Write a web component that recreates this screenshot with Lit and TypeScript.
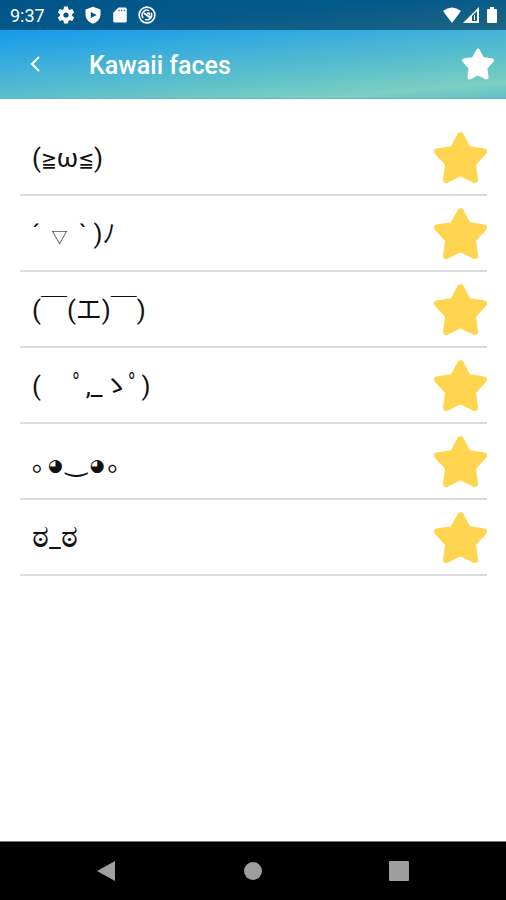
import { LitElement, html, css, svg } from "lit";
import { customElement, property, state } from "lit/decorators.js";

const starShape = svg`<path d="M50 8 L64 34 L94 39 L73 62 L77 92 L50 79 L23 92 L27 62 L6 39 L36 34 Z"
  fill="currentColor" stroke="currentColor" stroke-width="12" stroke-linejoin="round"/>`;

@customElement("status-bar")
class StatusBar extends LitElement {
  static styles = css`
    :host {
      display: flex;
      align-items: center;
      height: 30px;
      padding: 0 8px 0 10px;
      color: #fff;
      background: linear-gradient(175deg, #005488 0%, #04598b 45%, #1d6583 100%);
    }
    .time { font-size: 18px; line-height: 30px; padding-top: 2px; margin-right: 12px; }
    .group { display: flex; align-items: center; gap: 9px; }
    .right { margin-left: auto; gap: 1px; }
    svg { display: block; width: 18px; height: 18px; }
    .wide { width: 20px; }
    .signal { width: 17px; }
    .slim { width: 12px; margin-left: 5px; }
  `;
  render() {
    return html`
      <span class="time">9:37</span>
      <div class="group">
        <svg viewBox="1 1 22 22"><path fill="#fff" fill-rule="evenodd" d="M19.4 13c0-.3.1-.6.1-1s0-.7-.1-1l2.300-1.700c.2-.2.3-.4.1-.7l-2-3.600c-.1-.2-.4-.3-.6-.2l-2.600 1c-.5-.4-1.100-.7-1.700-1l-.4-2.700c0-.3-.2-.5-.5-.5h-4c-.3 0-.5.2-.5.5l-.4 2.700c-.6.3-1.200.6-1.700 1l-2.600-1c-.2-.1-.5 0-.6.2l-2 3.600c-.1.2-.1.5.1.7L4.600 11c0 .3-.1.6-.1 1s0 .7.1 1l-2.300 1.700c-.2.2-.3.4-.1.7l2 3.600c.1.2.4.3.6.2l2.600-1c.5.4 1.100.7 1.700 1l.4 2.700c0 .3.2.5.5.5h4c.3 0 .5-.2.5-.5l.4-2.700c.6-.3 1.200-.6 1.700-1l2.600 1c.2.1.5 0 .6-.2l2-3.600c.1-.2.1-.5-.1-.7zM12 15.200a3.200 3.200 0 1 1 0-6.400 3.200 3.200 0 0 1 0 6.400z"/></svg>
        <svg viewBox="0 0 24 24"><path fill="#fff" fill-rule="evenodd" d="M12 1 2 4.500V11c0 6 4 10.500 10 12.500 6-2 10-6.500 10-12.500V4.500zM9 8l8 4-8 4z"/></svg>
        <svg viewBox="0 0 24 24"><path fill="#fff" fill-rule="evenodd" d="M10 2h9a2 2 0 0 1 2 2v16a2 2 0 0 1-2 2H5a2 2 0 0 1-2-2V9zM10 5v2h1.500V5zM13.500 5v2H15V5zM17 5v2h1.500V5z"/></svg>
        <svg viewBox="0 0 24 24"><g fill="none" stroke="#fff"><circle cx="12" cy="12" r="10.500" stroke-width="2.200"/><path d="M7 16A6.300 6.300 0 0 1 15 6.500M17.500 9A6.300 6.300 0 0 1 9.500 17.800" stroke-width="2"/><path d="M8 9.500 17 16" stroke-width="2.600"/><path d="M12 9.500h3v3" stroke-width="2"/></g></svg>
      </div>
      <div class="group right">
        <svg class="wide" viewBox="0 0 20 18"><path fill="#fff" d="M10 17 1 5Q10-2 19 5z"/></svg>
        <svg class="signal" viewBox="1 0 17 18"><path fill="#fff" fill-rule="evenodd" d="M1 17 17 1v16zM10 10v5h5V5z"/><path d="M12.500 9v5" stroke="#fff" stroke-width="1"/></svg>
        <svg class="slim" viewBox="0 0 12 18"><path fill="#fff" d="M4 1h4v2h2q1 0 1 1v12q0 1-1 1H2q-1 0-1-1V4q0-1 1-1h2z"/></svg>
      </div>`;
  }
}

@customElement("app-header")
class AppHeader extends LitElement {
  static styles = css`
    :host {
      display: flex;
      align-items: center;
      height: 69px;
      box-sizing: border-box;
      padding: 0 12px 0 20px;
      color: #fff;
      border-bottom: 1px solid #5cb8bd;
      background: linear-gradient(175deg, #149ae9 0%, #22a1e5 12%, #45b3d8 40%, #5cc0cb 62%, #7ccfc3 86%, #60c0c6 100%);
    }
    button { display: grid; place-items: center; padding: 0; border: 0; background: none; color: inherit; cursor: pointer; }
    .back { width: 30px; height: 40px; }
    .back svg { width: 12px; height: 16px; }
    h1 { margin: 0 0 0 39px; font-size: 25px; line-height: 32px; font-weight: 500; padding-top: 4px; }
    .fav { margin-left: auto; }
    .fav svg { width: 32px; height: 32px; }
  `;
  render() {
    return html`
      <button class="back" aria-label="Back">
        <svg viewBox="0 0 12 16"><path d="M10 1 3 8l7 7" fill="none" stroke="#fff" stroke-width="2"/></svg>
      </button>
      <h1>Kawaii faces</h1>
      <button class="fav" aria-label="Favorites"><svg viewBox="0 0 100 100">${starShape}</svg></button>`;
  }
}

interface Part {
  text: string;
  kind?: "math" | "shape" | "eye" | "indic";
}

@customElement("face-row")
class FaceRow extends LitElement {
  @property({ attribute: false }) parts: Part[] = [];
  @state() starred = true;
  static styles = css`
    :host {
      display: flex;
      align-items: center;
      justify-content: space-between;
      box-sizing: border-box;
      height: 76px;
      border-bottom: 2px solid #dcdcdc;
      color: #111;
    }
    .face { padding: 2px 0 0 12px; font-size: 26px; line-height: 36px; white-space: pre; }
    .face span { line-height: 1; }
    .math { font-family: "DejaVu Sans Condensed", "DejaVu Sans", sans-serif; font-size: 21px; }
    .shape { font-size: 16px; padding: 0 5px; }
    .eye { font-family: "DejaVu Sans", sans-serif; font-size: 17px; padding: 0 3px; }
    .indic { font-size: 32px; font-weight: 500; }
    button { padding: 0; border: 0; background: none; color: #ffd54f; cursor: pointer; }
    .off { color: #ddd; }
    svg { display: block; width: 53px; height: 53px; }
  `;
  render() {
    return html`
      <span class="face">${this.parts.map((p) => (p.kind ? html`<span class=${p.kind}>${p.text}</span>` : p.text))}</span>
      <button class=${this.starred ? "on" : "off"} aria-label="Favorite" aria-pressed=${this.starred}
        @click=${() => (this.starred = !this.starred)}>
        <svg viewBox="0 0 100 100">${starShape}</svg>
      </button>`;
  }
}

@customElement("nav-bar")
class NavBar extends LitElement {
  static styles = css`
    :host {
      display: flex;
      align-items: center;
      justify-content: center;
      gap: 106px;
      height: 58px;
      border-top: 1px solid #777;
      background: #000;
    }
    button { width: 40px; height: 40px; display: grid; place-items: center; padding: 0; border: 0; background: none; cursor: pointer; }
    svg { width: 20px; height: 22px; }
  `;
  render() {
    return html`
      <button aria-label="Back"><svg viewBox="0 0 20 22"><path fill="#9e9e9e" d="M0 11 18 1v20z"/></svg></button>
      <button aria-label="Home"><svg viewBox="0 0 20 22"><circle cx="10" cy="11" r="9" fill="#9e9e9e"/></svg></button>
      <button aria-label="Recents"><svg viewBox="0 0 20 22"><rect y="1" width="20" height="20" rx="1" fill="#9e9e9e"/></svg></button>`;
  }
}

@customElement("app-root")
class AppRoot extends LitElement {
  faces: Part[][] = [
    [{ text: "(" }, { text: "≧", kind: "math" }, { text: "ω" }, { text: "≦", kind: "math" }, { text: ")" }],
    [{ text: "´ " }, { text: "▽", kind: "shape" }, { text: " ` )ﾉ" }],
    [{ text: "(￣(エ)￣)" }],
    [{ text: "(　 ﾟ,_ゝﾟ)" }],
    [{ text: "｡" }, { text: "◕", kind: "eye" }, { text: "‿" }, { text: "◕", kind: "eye" }, { text: "｡" }],
    [{ text: "ಠ", kind: "indic" }, { text: "_" }, { text: "ಠ", kind: "indic" }],
  ];
  static styles = css`
    :host {
      display: flex;
      flex-direction: column;
      min-height: 100vh;
      background: #fff;
      font-family: Roboto, "Noto Sans CJK JP", "DejaVu Sans", sans-serif;
    }
    main { flex: 1; padding: 21px 19px 20px 20px; }
    ul { list-style: none; margin: 0; padding: 0; }
  `;
  render() {
    return html`
      <status-bar></status-bar>
      <app-header></app-header>
      <main>
        <ul>${this.faces.map((f) => html`<li><face-row .parts=${f}></face-row></li>`)}</ul>
      </main>
      <nav-bar></nav-bar>`;
  }
}
